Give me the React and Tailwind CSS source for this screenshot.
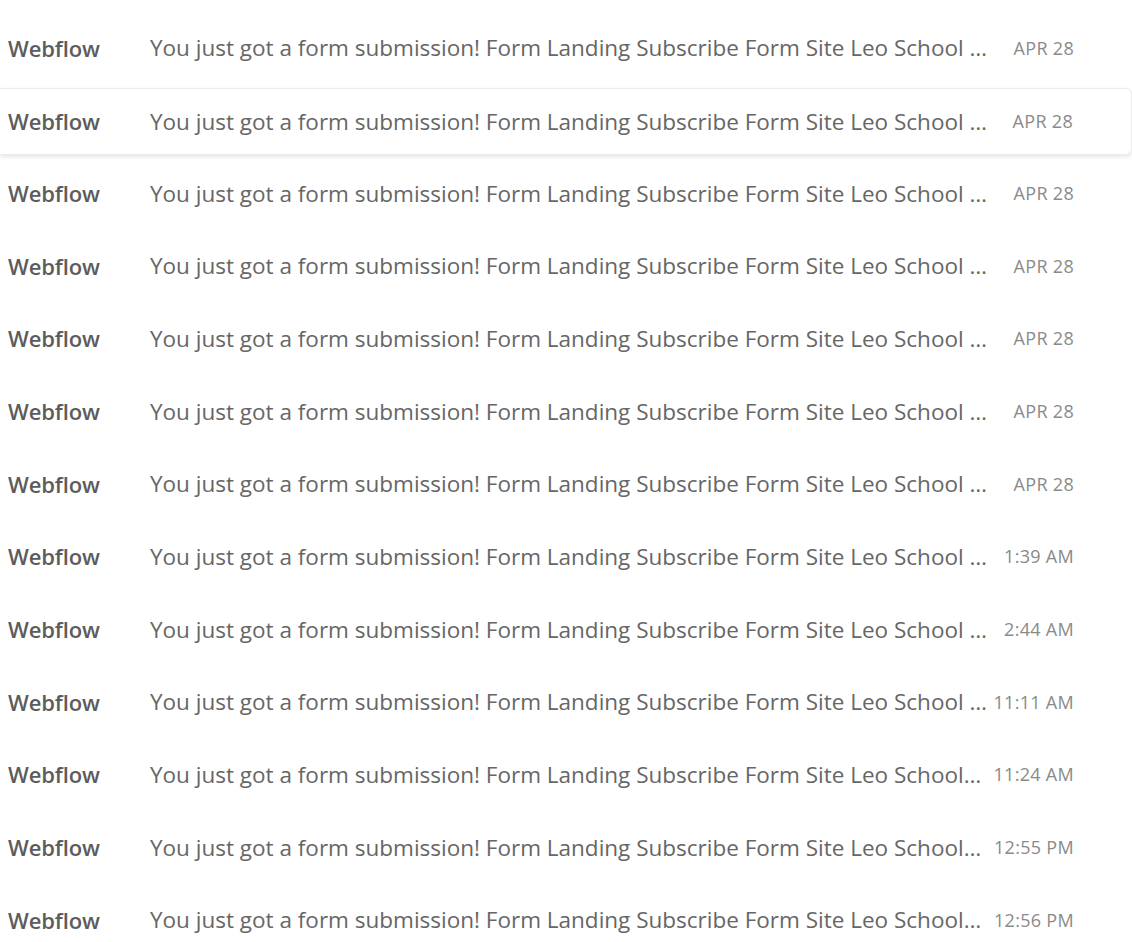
import React from "react";

const rows = [
  ["APR 28", " …"],
  ["APR 28", " …"],
  ["APR 28", " …"],
  ["APR 28", " …"],
  ["APR 28", " …"],
  ["APR 28", " …"],
  ["APR 28", " …"],
  ["1:39 AM", " …"],
  ["2:44 AM", " …"],
  ["11:11 AM", " …"],
  ["11:24 AM", "…"],
  ["12:55 PM", "…"],
  ["12:56 PM", "…"],
];

const subject =
  "You just got a form submission! Form Landing Subscribe Form Site Leo School";

export default function App() {
  return (
    <div
      className="w-[1132px] h-[942px] overflow-hidden bg-white pt-[12px]"
      style={{ fontFamily: '"Open Sans", "Liberation Sans", sans-serif' }}
    >
      {rows.map(([t, e], i) => {
        const active = i === 1;
        return (
          <div key={i} className="h-[72.67px] flex items-center">
            <div
              className={
                "w-full h-[67px] flex items-center pl-[8px] pr-[58px] " +
                (active
                  ? "bg-white border border-l-0 border-[#ececec] rounded-r-[6px] shadow-[0_2px_4px_rgba(0,0,0,0.10)] translate-y-[1px]"
                  : "")
              }
            >
              <div className="w-[142px] shrink-0 text-[22px] font-semibold text-[#5c5c5c] tracking-[-0.1px]">
                Webflow
              </div>
              <div className="flex-1 min-w-0 whitespace-nowrap text-[22.5px] text-[#666666]">
                {subject}
                {e}
              </div>
              <div className="shrink-0 ml-[8px] text-right text-[18px] tracking-[0.3px] text-[#8a8a8a] uppercase">
                {t}
              </div>
            </div>
          </div>
        );
      })}
    </div>
  );
}
